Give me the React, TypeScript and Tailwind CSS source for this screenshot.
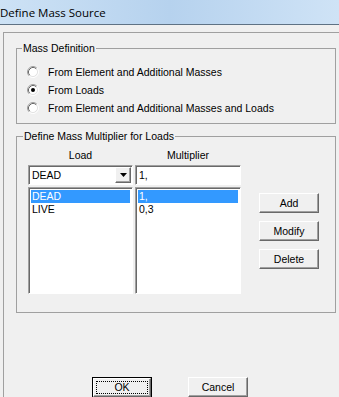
import React from "react";

const sunken =
  "border border-t-[#a0a0a0] border-l-[#a0a0a0] border-r-white border-b-white shadow-[inset_1px_1px_0_#696969]";
const raised =
  "border border-t-white border-l-white border-r-[#696969] border-b-[#696969] shadow-[inset_-1px_-1px_0_#a0a0a0]";

function Radio({ checked, label }: { checked?: boolean; label: string }) {
  return (
    <div className="flex h-[18px] items-center">
      <svg width="12" height="12" viewBox="0 0 12 12" className="shrink-0">
        <circle cx="6" cy="6" r="4.5" fill="white" />
        <path d="M2.11 9.89 A5.5 5.5 0 0 1 9.89 2.11" fill="none" stroke="#a0a0a0" />
        <path d="M9.89 2.11 A5.5 5.5 0 0 1 2.11 9.89" fill="none" stroke="#ffffff" />
        <path d="M2.82 9.18 A4.5 4.5 0 0 1 9.18 2.82" fill="none" stroke="#696969" />
        <path d="M9.18 2.82 A4.5 4.5 0 0 1 2.82 9.18" fill="none" stroke="#e3e3e3" />
        {checked && <circle cx="6" cy="6" r="2" fill="black" />}
      </svg>
      <span className="ml-[9px]">{label}</span>
    </div>
  );
}

function Button({ label, isDefault }: { label: string; isDefault?: boolean }) {
  if (isDefault) {
    return (
      <div className="h-[21px] w-[60px] border border-black">
        <div className={`${raised} flex h-full w-full items-center justify-center p-[2px]`}>
          <div className="flex h-full w-full items-center justify-center border border-dotted border-black">
            {label}
          </div>
        </div>
      </div>
    );
  }
  return (
    <div className={`${raised} flex h-[20px] w-[60px] items-center justify-center`}>{label}</div>
  );
}

export default function App() {
  return (
    <div
      className="h-[397px] w-[339px] overflow-hidden bg-[#f0f0f0] text-[10.5px] leading-[13px] text-black"
      style={{ fontFamily: '"Liberation Sans", Arial, sans-serif' }}
    >
      {/* title bar */}
      <div className="flex h-[25px] items-center border-b border-[#5f7284] bg-gradient-to-r from-[#cde2f5] via-[#b6d2ee] to-[#cfe3f6]">
        <span className="text-[11.5px]" style={{ fontFamily: '"Open Sans", "Noto Sans", sans-serif' }}>
          Define Mass Source
        </span>
      </div>

      <div className="ml-[3px] mt-[7px] border-l border-t border-[#a0a0a0] pl-[12px] pt-[9px]">
        {/* Mass Definition */}
        <fieldset className="w-[320px] border border-[#a0a0a0] pb-[6px]">
          <legend className="ml-[5px] px-[1px]">Mass Definition</legend>
          <div className="flex flex-col pl-[10px] pt-[8px]">
            <Radio label="From Element and Additional Masses" />
            <Radio checked label="From Loads" />
            <Radio label="From Element and Additional Masses and Loads" />
          </div>
        </fieldset>

        {/* Multiplier for loads */}
        <fieldset className="mt-[6px] w-[320px] border border-[#a0a0a0] pb-[18px]">
          <legend className="ml-[6px] px-[1px]">Define Mass Multiplier for Loads</legend>
          <div className="flex pl-[11px] pt-[6px]">
            <div className="flex w-[105px] flex-col">
              <div className="text-center">Load</div>
              <div className={`${sunken} mt-[3px] flex h-[20px] items-center bg-white pl-[3px]`}>
                <span className="flex-1">DEAD</span>
                <div className={`${raised} mr-[1px] flex h-[16px] w-[16px] items-center justify-center bg-[#f0f0f0]`}>
                  <svg width="7" height="4" viewBox="0 0 7 4">
                    <path d="M0 0 H7 L3.5 4 Z" fill="black" />
                  </svg>
                </div>
              </div>
              <div className={`${sunken} mt-[2px] h-[107px] bg-white p-[2px]`}>
                <div className="bg-[#3399ff] pl-[1px] text-white">DEAD</div>
                <div className="pl-[1px]">LIVE</div>
              </div>
            </div>

            <div className="ml-[2px] flex w-[106px] flex-col">
              <div className="text-center">Multiplier</div>
              <div className={`${sunken} mt-[3px] flex h-[20px] items-center bg-white pl-[3px]`}>1,</div>
              <div className={`${sunken} mt-[2px] h-[107px] bg-white p-[2px]`}>
                <div className="bg-[#3399ff] pl-[1px] text-white">1,</div>
                <div className="pl-[1px]">0,3</div>
              </div>
            </div>

            <div className="ml-[18px] flex flex-col gap-[8px] pt-[44px]">
              <Button label="Add" />
              <Button label="Modify" />
              <Button label="Delete" />
            </div>
          </div>
        </fieldset>

        <div className="mt-[64px] flex gap-[36px] pl-[76px]">
          <Button isDefault label="OK" />
          <Button label="Cancel" />
        </div>
      </div>
    </div>
  );
}
